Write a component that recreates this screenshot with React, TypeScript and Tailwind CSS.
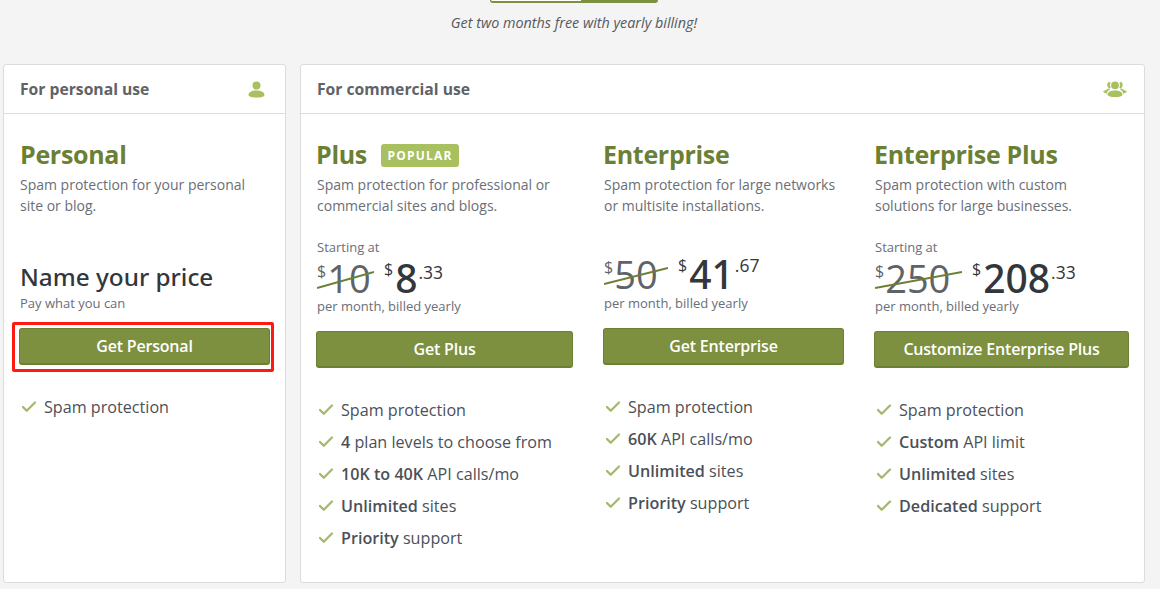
import { Check } from "lucide-react";
import type { ReactNode } from "react";

function PersonIcon() {
  return (
    <svg width="17" height="17" viewBox="0 0 17 17" fill="#a8c060">
      <circle cx="8.5" cy="4.6" r="4" />
      <path d="M0.5 14c0-3 3.4-4.6 8-4.6s8 1.6 8 4.6c0 1.600-3.600 2.600-8 2.600s-8-1-8-2.600z" />
    </svg>
  );
}

function GroupIcon() {
  return (
    <svg width="24" height="17" viewBox="0 0 24 17" fill="#a8c060">
      <circle cx="12" cy="4.300" r="3.900" />
      <path d="M4.500 13.400C4.500 10.800 8 9.400 12 9.400s7.500 1.400 7.500 4c0 1.700-3.500 2.700-7.500 2.700s-7.500-1-7.500-2.700z" />
      <path d="M5.500 1 7.700 1.500C6.800 3 6.800 5 7.700 6.500L6.500 7.700C4 6 3.500 3 5.500 1z" />
      <path d="M18.500 1 16.300 1.500C17.200 3 17.200 5 16.300 6.500L17.500 7.700C20 6 20.500 3 18.500 1z" />
      <path d="M0 10.500 5.500 7.500 7 8.500C5 9.500 4 11 3.800 12.700 2 12.300.8 11.500 0 10.500z" />
      <path d="M24 10.500 18.500 7.500 17 8.500C19 9.500 20 11 20.200 12.700 22 12.300 23.200 11.500 24 10.500z" />
    </svg>
  );
}

function Feature({ children }: { children: ReactNode }) {
  return (
    <li className="flex h-8 items-center pl-[1px] text-[16.150px] text-[#4c5058]">
      <Check className="mr-[6px] h-[18px] w-[18px] text-[#a3b86c]" strokeWidth={3} />
      <span>{children}</span>
    </li>
  );
}

function Price({
  old,
  oldWidth,
  dollars,
  cents,
  centsOffset,
}: {
  old: string;
  oldWidth: string;
  dollars: string;
  cents: string;
  centsOffset: string;
}) {
  return (
    <div className="flex h-[38px] items-start text-[#33363b]">
      <div className={`relative flex ${oldWidth} text-[#5f6368]`}>
        <span className="mt-[2px] text-[16px] leading-[20px]">$</span>
        <span className="ml-[1px] text-[38px] leading-[38px]">{old}</span>
        <svg className="absolute left-0 top-[12px] h-[18px] w-full" viewBox="0 0 100 18" preserveAspectRatio="none">
          <path d="M0 17 100 1" stroke="#6b7f35" strokeWidth="2" vectorEffect="non-scaling-stroke" />
        </svg>
      </div>
      <span className="ml-[10px] text-[16px] leading-[20px]">$</span>
      <span className="ml-[2px] font-['Noto_Sans',sans-serif] text-[39px] font-medium leading-[38px]">{dollars}</span>
      <span className={`${centsOffset} ml-[1px] text-[17.500px] leading-[20px]`}>.{cents}</span>
    </div>
  );
}

function Plan({
  title,
  badge,
  desc,
  starting,
  old,
  oldWidth,
  dollars,
  cents,
  cta,
  features,
  className,
}: {
  title: string;
  badge?: boolean;
  desc: string[];
  starting?: boolean;
  old: string;
  oldWidth: string;
  dollars: string;
  cents: string;
  cta: string;
  features: ReactNode[];
  className: string;
}) {
  return (
    <div className={className}>
      <div className="flex h-[34px] items-center">
        <h2 className="text-[25px] font-bold tracking-[-0.3px] text-[#6b7f35]">{title}</h2>
        {badge && (
          <span className="ml-[14px] w-[78px] rounded-[3px] bg-[#a8c060] py-[2px] text-center text-[12px] font-bold leading-[19px] tracking-[1.2px] text-white">
            POPULAR
          </span>
        )}
      </div>
      <p className="mt-[2px] ml-[1px] text-[14px] leading-[21px] text-[#6a6e76]">
        {desc[0]}
        <br />
        {desc[1]}
      </p>
      <div className={starting ? "mt-[23px] ml-[1px]" : "mt-[39px] ml-[1px]"}>
        {starting && <p className="mb-[3px] text-[13px] leading-[17px] text-[#6a6e76]">Starting at</p>}
        <Price
          old={old}
          oldWidth={oldWidth}
          dollars={dollars}
          cents={cents}
          centsOffset={starting ? "mt-[3px]" : "mt-0"}
        />
        <p className={starting ? "mt-[1px] text-[13px] leading-[17px] text-[#6a6e76]" : "mt-[2px] text-[13px] leading-[17px] text-[#6a6e76]"}>
          per month, billed yearly
        </p>
      </div>
      <button className="mt-[16px] flex h-[37px] w-full items-center justify-center rounded-[3px] border border-[#6b7f35] border-b-2 bg-[#7d9040] text-[16px] font-semibold tracking-[-0.2px] text-white">
        {cta}
      </button>
      <ul className="mt-[26px]">
        {features.map((f, i) => (
          <Feature key={i}>{f}</Feature>
        ))}
      </ul>
    </div>
  );
}

export default function App() {
  return (
    <div className="h-[589px] w-[1160px] overflow-hidden bg-[#f4f4f4] font-['Open_Sans',sans-serif]">
      <div className="flex justify-center">
        <div className="ml-[-12px] flex h-[3px] w-[168px]">
          <div className="w-[92px] rounded-bl-[3px] border-b-2 border-x border-[#7d9040] bg-white" />
          <div className="flex-1 rounded-br-[3px] bg-[#7d9040]" />
        </div>
      </div>
      <p className="mt-[10px] h-[52px] pr-[12px] text-center text-[14.350px] italic leading-[20px] text-[#55595f]">
        Get two months free with yearly billing!
      </p>
      <div className="-mt-[1px] flex items-stretch pl-[3px]">
        {/* personal card */}
        <section className="h-[519px] w-[283px] rounded-[3px] border border-[#dcdcdc] bg-white">
          <header className="flex h-[49px] items-center justify-between border-b border-[#dcdcdc] pl-[16px] pr-[20px] pt-[1px]">
            <h3 className="text-[15.700px] font-bold text-[#5f6368]">For personal use</h3>
            <PersonIcon />
          </header>
          <div className="px-[15px] pt-[24px]">
            <div className="ml-[1px] flex h-[34px] items-center">
              <h2 className="text-[25px] font-bold tracking-[-0.3px] text-[#6b7f35]">Personal</h2>
            </div>
            <p className="mt-[2px] ml-[1px] text-[14px] leading-[21px] text-[#6a6e76]">
              Spam protection for your personal
              <br />
              site or blog.
            </p>
            <p className="mt-[44px] ml-[1px] font-['Noto_Sans',sans-serif] text-[24.300px] font-medium leading-[34px] text-[#33363b]">
              Name your price
            </p>
            <p className="mt-[1px] ml-[1px] text-[13px] leading-[17px] text-[#6a6e76]">Pay what you can</p>
            <div className="relative mt-[16px] w-[251px]">
              <button className="flex h-[37px] w-full items-center justify-center rounded-[3px] border border-[#6b7f35] border-b-2 bg-[#7d9040] text-[16px] font-semibold tracking-[-0.2px] text-white">
                Get Personal
              </button>
              <span className="pointer-events-none absolute -bottom-[7px] -left-[7px] -right-[4px] -top-[6px] rounded-[2px] border-[3px] border-[#fe1a10]" />
            </div>
            <ul className="mt-[26px]">
              <Feature>Spam protection</Feature>
            </ul>
          </div>
        </section>

        {/* commercial card */}
        <section className="ml-[14px] h-[519px] w-[845px] rounded-[3px] border border-[#dcdcdc] bg-white">
          <header className="flex h-[49px] items-center justify-between border-b border-[#dcdcdc] pl-[16px] pr-[17px] pt-[1px]">
            <h3 className="text-[15.700px] font-bold text-[#5f6368]">For commercial use</h3>
            <GroupIcon />
          </header>
          <div className="flex items-start pl-[15px] pt-[24px]">
            <Plan
              className="w-[257px]"
              title="Plus"
              badge
              desc={["Spam protection for professional or", "commercial sites and blogs."]}
              starting
              old="10"
              oldWidth="w-[57px]"
              dollars="8"
              cents="33"
              cta="Get Plus"
              features={[
                "Spam protection",
                <><b className="font-semibold">4</b> plan levels to choose from</>,
                <><b className="font-semibold">10K to 40K</b> API calls/mo</>,
                <><b className="font-semibold">Unlimited</b> sites</>,
                <><b className="font-semibold">Priority</b> support</>,
              ]}
            />
            <Plan
              className="ml-[30px] w-[241px]"
              title="Enterprise"
              desc={["Spam protection for large networks", "or multisite installations."]}
              old="50"
              oldWidth="w-[64px]"
              dollars="41"
              cents="67"
              cta="Get Enterprise"
              features={[
                "Spam protection",
                <><b className="font-semibold">60K</b> API calls/mo</>,
                <><b className="font-semibold">Unlimited</b> sites</>,
                <><b className="font-semibold">Priority</b> support</>,
              ]}
            />
            <Plan
              className="ml-[30px] w-[255px]"
              title="Enterprise Plus"
              desc={["Spam protection with custom", "solutions for large businesses."]}
              starting
              old="250"
              oldWidth="w-[87px]"
              dollars="208"
              cents="33"
              cta="Customize Enterprise Plus"
              features={[
                "Spam protection",
                <><b className="font-semibold">Custom</b> API limit</>,
                <><b className="font-semibold">Unlimited</b> sites</>,
                <><b className="font-semibold">Dedicated</b> support</>,
              ]}
            />
          </div>
        </section>
      </div>
    </div>
  );
}
